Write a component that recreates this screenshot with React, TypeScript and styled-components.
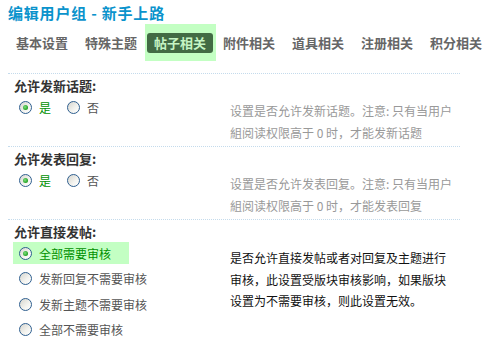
import React from 'react';
import styled, { createGlobalStyle } from 'styled-components';

const GlobalStyle = createGlobalStyle`
  body {
    margin: 0;
    background: #fff;
    font-family: "Noto Sans CJK SC", "Liberation Sans", sans-serif;
    font-size: 12px;
    color: #333;
    overflow: hidden;
  }
`;

const tabs = ['基本设置', '特殊主题', '帖子相关', '附件相关', '道具相关', '注册相关', '积分相关'];

type Option = { label: string; checked?: boolean };

export default function App() {
  return (
    <Page>
      <GlobalStyle />
      <Title>编辑用户组 - 新手上路</Title>
      <TabBar>
        {tabs.map((t) => (
          <Tab key={t} $active={t === '帖子相关'}>
            {t}
          </Tab>
        ))}
      </TabBar>

      <SectionList>
        <Section>
          <Label>允许发新话题:</Label>
          <Row>
            <InlineOptions>
              <RadioOption checked label="是" />
              <RadioOption label="否" />
            </InlineOptions>
            <Desc>设置是否允许发新话题。注意: 只有当用户組阅读权限高于 0 时，才能发新话题</Desc>
          </Row>
        </Section>

        <Section>
          <Label>允许发表回复:</Label>
          <Row>
            <InlineOptions>
              <RadioOption checked label="是" />
              <RadioOption label="否" />
            </InlineOptions>
            <Desc>设置是否允许发表回复。注意: 只有当用户組阅读权限高于 0 时，才能发表回复</Desc>
          </Row>
        </Section>

        <Section>
          <Label>允许直接发帖:</Label>
          <Row>
            <StackOptions>
              {([
                { label: '全部需要审核', checked: true },
                { label: '发新回复不需要审核' },
                { label: '发新主题不需要审核' },
                { label: '全部不需要审核' },
              ] as Option[]).map((o) => (
                <RadioOption key={o.label} {...o} highlight={o.checked} />
              ))}
            </StackOptions>
            <Desc $dark $top={5} $lh={21.5}>
              是否允许直接发帖或者对回复及主题进行审核，此设置受版块审核影响，如果版块设置为不需要审核，则此设置无效。
            </Desc>
          </Row>
        </Section>
      </SectionList>
    </Page>
  );
}

function RadioOption({ label, checked, highlight }: Option & { highlight?: boolean }) {
  return (
    <OptionItem $highlight={highlight}>
      <Radio $checked={checked} />
      <OptionText $checked={checked}>{label}</OptionText>
    </OptionItem>
  );
}

const Page = styled.div`
  width: 452px;
  padding: 0 24px 0 8px;
`;

const Title = styled.h1`
  margin: 0;
  padding-top: 3px;
  height: 20px;
  line-height: 20px;
  font-size: 15px;
  letter-spacing: 0.8px;
  font-weight: bold;
  color: #0a93cc;
  white-space: nowrap;
`;

const TabBar = styled.nav`
  display: flex;
  gap: 3px;
  margin-top: 10px;
  padding-left: 1px;
`;

const Tab = styled.span<{ $active?: boolean }>`
  position: relative;
  flex-shrink: 0;
  width: 66px;
  height: 20px;
  line-height: 20px;
  text-align: center;
  font-size: 13px;
  font-weight: bold;
  border-radius: 3px;
  color: ${({ $active }) => ($active ? '#c6f5c4' : '#666')};
  background: ${({ $active }) => ($active ? '#426b44' : 'transparent')};
  white-space: nowrap;

  ${({ $active }) =>
    $active &&
    `
    &::before {
      content: '';
      position: absolute;
      inset: -9px -3px -8px -2px;
      background: #c3ffc3;
      z-index: -1;
    }
  `}
`;

const SectionList = styled.div`
  margin-top: 20px;
  position: relative;
  z-index: 0;
`;

const Section = styled.section`
  border-top: 1px dotted #c4dbec;
  padding: 4px 0 2px;
`;

const Label = styled.div`
  height: 16px;
  line-height: 16px;
  padding-left: 6px;
  font-size: 13px;
  font-weight: bold;
  color: #333;
`;

const Row = styled.div`
  display: flex;
  align-items: flex-start;
  margin-top: 2px;
`;

const InlineOptions = styled.div`
  display: flex;
  gap: 10px;
  width: 217px;
  padding-left: 5px;
`;

const StackOptions = styled.div`
  display: flex;
  flex-direction: column;
  align-items: flex-start;
  gap: 3.5px;
  width: 217px;
  padding-left: 5px;
`;

const OptionItem = styled.label<{ $highlight?: boolean }>`
  display: flex;
  align-items: center;
  gap: 7px;
  height: 22px;
  padding: 0 18px 0 6px;
  background: ${({ $highlight }) => ($highlight ? '#c3ffc3' : 'transparent')};

  ${InlineOptions} & {
    padding-right: 0;
  }
`;

const Radio = styled.span<{ $checked?: boolean }>`
  position: relative;
  box-sizing: border-box;
  width: 13px;
  height: 13px;
  border-radius: 50%;
  border: 1px solid #2f5f8f;
  background: linear-gradient(135deg, #d6d5ce 0%, #f4f4f0 60%, #fff 100%);

  &::after {
    content: '';
    display: ${({ $checked }) => ($checked ? 'block' : 'none')};
    position: absolute;
    left: 3px;
    top: 3px;
    width: 5px;
    height: 5px;
    border-radius: 50%;
    background: radial-gradient(circle at 40% 40%, #7fe07f 0%, #22a022 70%, #178a17 100%);
  }
`;

const OptionText = styled.span<{ $checked?: boolean }>`
  font-size: 12px;
  color: ${({ $checked }) => ($checked ? '#009000' : '#555')};
`;

const Desc = styled.p<{ $dark?: boolean; $top?: number; $lh?: number }>`
  margin: 0;
  width: 224px;
  padding-top: ${({ $top }) => $top ?? 4}px;
  line-height: ${({ $lh }) => $lh ?? 22}px;
  font-size: 12px;
  color: ${({ $dark }) => ($dark ? '#111' : '#999')};
`;
